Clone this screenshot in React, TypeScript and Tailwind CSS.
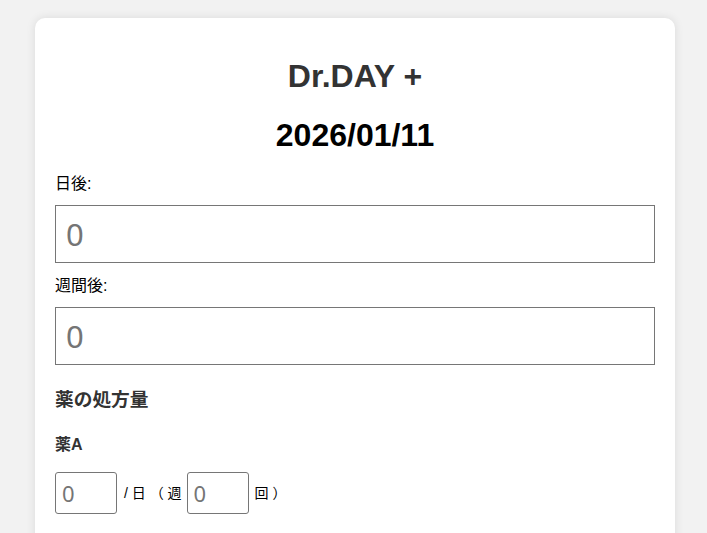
export default function App() {
  const font = "font-['Liberation_Sans','Noto_Sans_CJK_JP',sans-serif]"

  return (
    <div className={`min-h-[533px] bg-[#f2f2f2] pt-[18px] ${font}`}>
      <div className="ml-[35px] w-[640px] rounded-[10px] bg-white px-5 pt-5 pb-10 shadow-[0_0_10px_rgba(0,0,0,0.1)]">
        <h1 className="mt-5 text-center text-[32px] font-bold leading-[37px] text-[#333]">Dr.DAY +</h1>
        <h2 className="mt-[22px] text-center text-[32px] font-bold leading-[37px] text-black">2026/01/11</h2>

        <label className="mt-[20px] block text-base leading-5 text-black">日後:</label>
        <input
          type="number"
          placeholder="0"
          className="mt-[11px] block h-[58px] w-full border border-[#767676] px-[10px] font-['Noto_Sans',sans-serif] text-[31px] placeholder:text-[#757575]"
        />

        <label className="mt-[13px] block text-base leading-5 text-black">週間後:</label>
        <input
          type="number"
          placeholder="0"
          className="mt-[11px] block h-[58px] w-full border border-[#767676] px-[10px] font-['Noto_Sans',sans-serif] text-[31px] placeholder:text-[#757575]"
        />

        <h3 className="mt-[23px] text-[18.72px] font-bold leading-6 text-[#333]">薬の処方量</h3>
        <h4 className="mt-[23px] text-base font-bold leading-5 text-[#333]">薬A</h4>

        <div className="mt-[17px] flex items-center text-sm text-black">
          <input
            type="number"
            placeholder="0"
            className="h-[42px] w-[62px] rounded-[3px] border border-[#767676] px-[6px] font-['Noto_Sans',sans-serif] text-[22px] placeholder:text-[#757575]"
          />
          <span className="ml-[7px]">/ 日 （ 週</span>
          <input
            type="number"
            placeholder="0"
            className="ml-[5px] h-[42px] w-[62px] rounded-[3px] border border-[#767676] px-[6px] font-['Noto_Sans',sans-serif] text-[22px] placeholder:text-[#757575]"
          />
          <span className="ml-[6px]">回 ）</span>
        </div>
      </div>
    </div>
  )
}
